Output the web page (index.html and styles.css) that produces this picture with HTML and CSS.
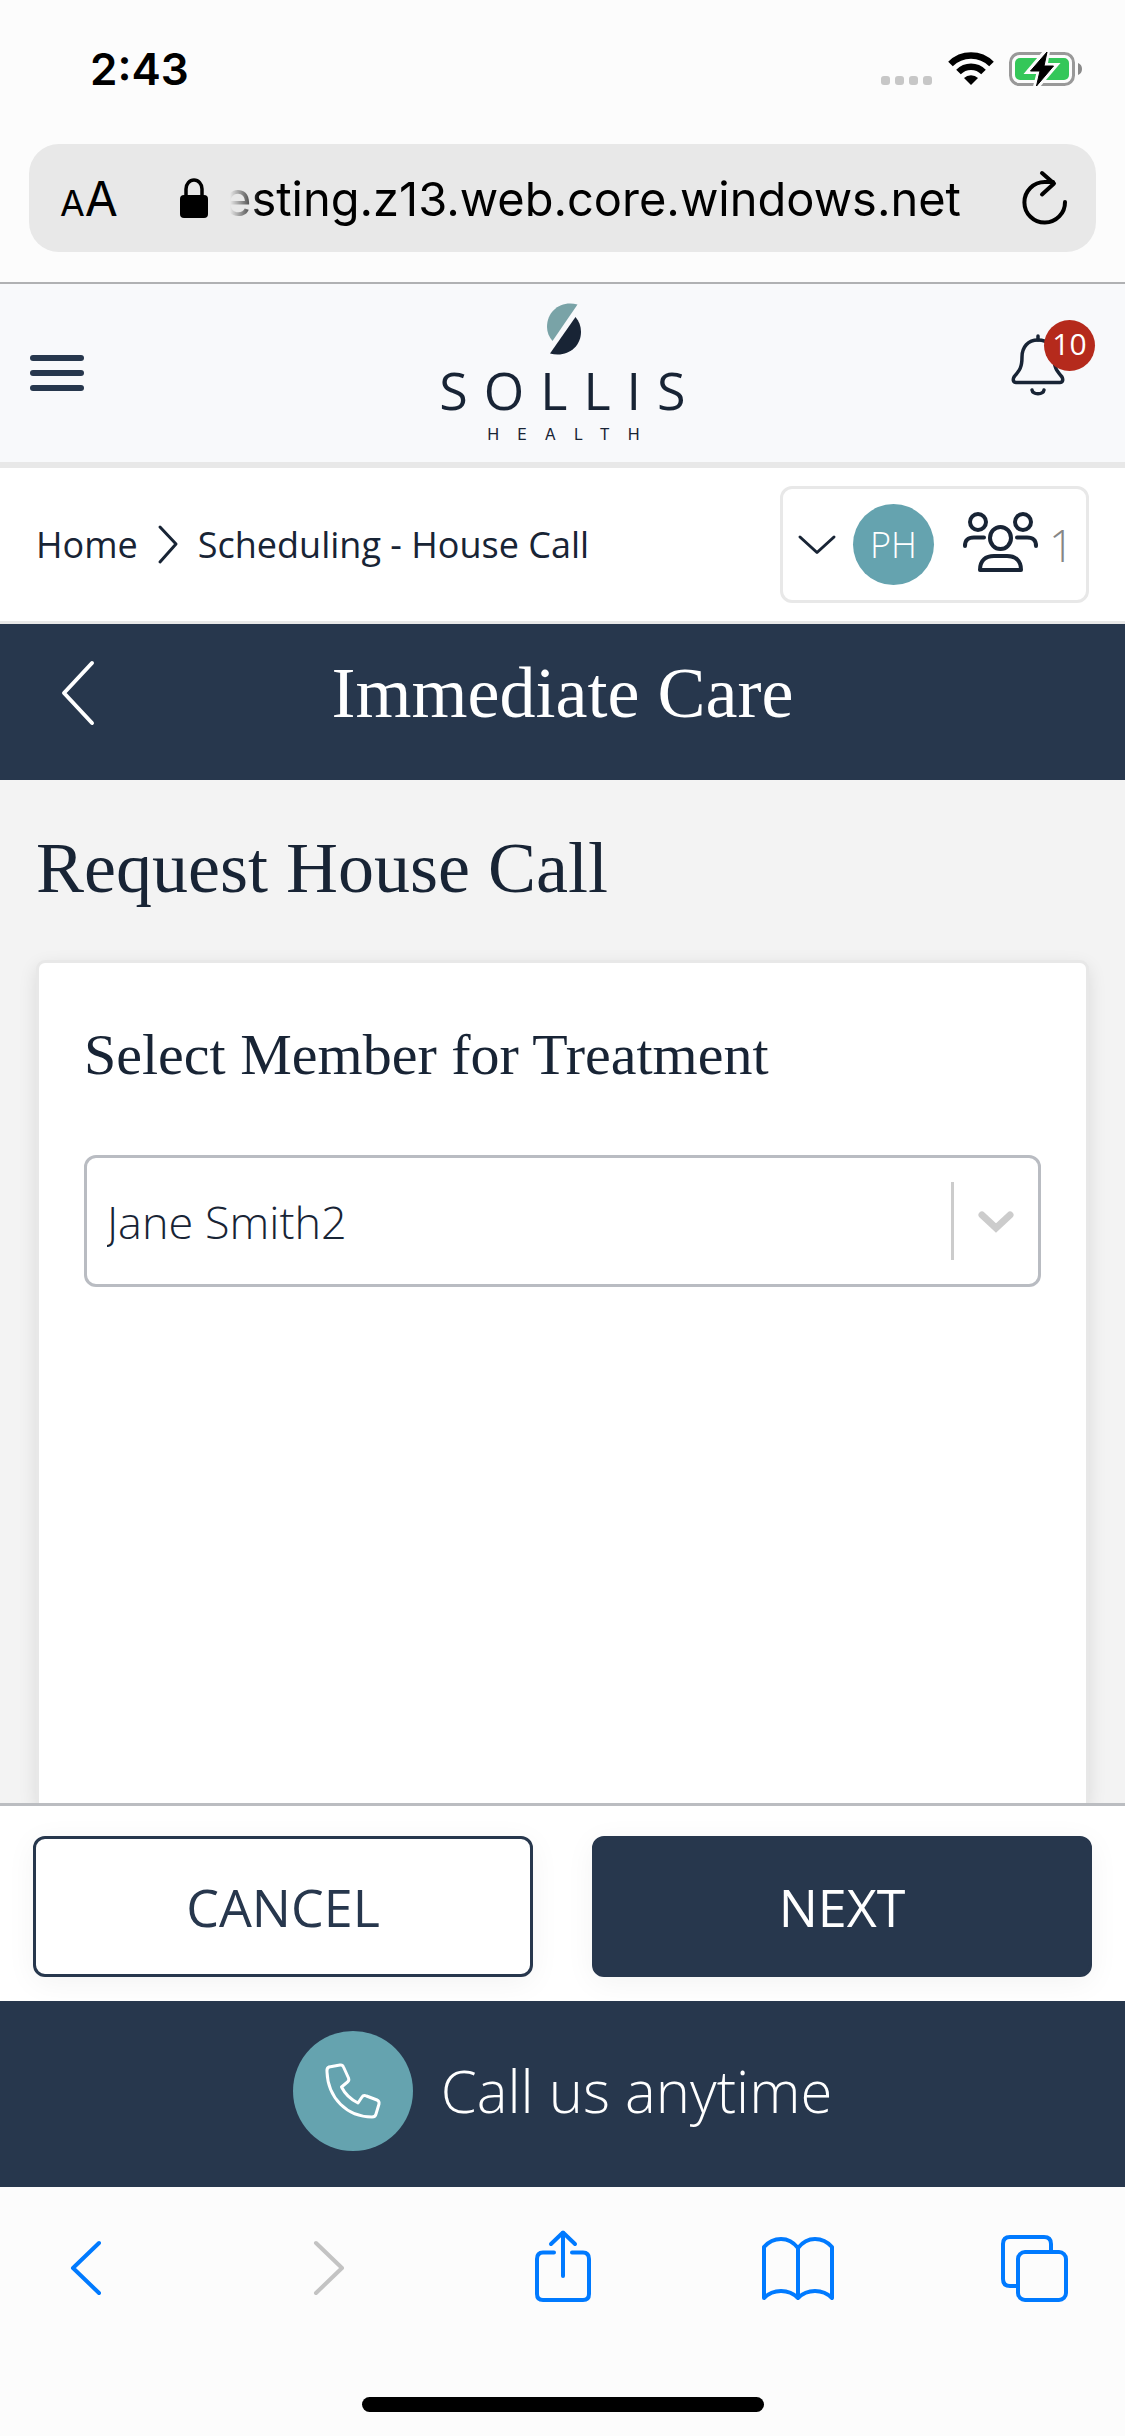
FILE: index.html
```html
<!DOCTYPE html>
<html lang="en">
<head>
<meta charset="utf-8">
<meta name="viewport" content="width=device-width, initial-scale=1">
<title>Sollis Health - Request House Call</title>
<link rel="stylesheet" href="styles.css">
</head>
<body>
<div class="browser-top">
  <div class="status-bar">
    <span class="clock">2:43</span>
    <div class="status-icons">
      <svg class="signal" width="52" height="34" viewBox="0 0 52 34" fill="#c7c7c7" aria-hidden="true">
        <rect x="0" y="24" width="9" height="9" rx="3"/><rect x="14" y="24" width="9" height="9" rx="3"/><rect x="28" y="24" width="9" height="9" rx="3"/><rect x="42" y="24" width="9" height="9" rx="3"/>
      </svg>
      <svg class="wifi" width="46" height="34" viewBox="0 0 46 34" aria-hidden="true">
        <path d="M2.500 12 A29 29 0 0 1 43.500 12" fill="none" stroke="#000" stroke-width="6.500"/>
        <path d="M10.500 20 A17.700 17.700 0 0 1 35.500 20" fill="none" stroke="#000" stroke-width="6.500"/>
        <path d="M16 26 A10 10 0 0 1 30 26 L23 33 Z"/>
      </svg>
      <svg class="battery" width="73" height="36" viewBox="0 0 73 36" aria-hidden="true">
        <rect x="1.500" y="2.500" width="63" height="31" rx="9" fill="none" stroke="#999" stroke-width="3"/>
        <path d="M69 12 a6.500 6.500 0 0 1 0 12 Z" fill="#8a8a8a"/>
        <rect x="6" y="7" width="54" height="22" rx="5" fill="#34c759"/>
        <path d="M38 0 L21 20 H31 L27 36 L45 15 H35.500 Z" stroke="#fcfcfc" stroke-width="6"/>
        <path d="M38 1 L21.500 20 H31 L27.500 35 L44.500 15 H35 Z" fill="#000" stroke="#000" stroke-width="1"/>
      </svg>
    </div>
  </div>
  <div class="address-bar">
    <button class="icon-button text-size" type="button" aria-label="Page settings"><span class="text-size-small">A</span><span class="text-size-large">A</span></button>
    <svg class="lock" width="28" height="40" viewBox="0 0 28 40" aria-hidden="true">
      <rect x="0" y="17" width="28" height="23" rx="4"/>
      <path d="M6 19 V11 a8 9 0 0 1 16 0 V19" fill="none" stroke="#000" stroke-width="3.500"/>
    </svg>
    <input class="url" type="text" value="esting.z13.web.core.windows.net" aria-label="Address">
    <button class="icon-button" type="button" aria-label="Reload">
      <svg width="46" height="54" viewBox="0 0 46 54" fill="none" stroke="#000" stroke-width="4" stroke-linecap="round" stroke-linejoin="round">
        <path d="M43 31 A20.300 20.300 0 1 1 22.700 11 H31"/>
        <path d="M20 2 L32 12.500 L20 23.500"/>
      </svg>
    </button>
  </div>
</div>

<header class="app-header">
  <button class="icon-button menu-button" type="button" aria-label="Menu">
    <svg width="54" height="36" viewBox="0 0 54 36" fill="#27374d"><rect width="54" height="6" rx="3"/><rect y="15" width="54" height="6" rx="3"/><rect y="30" width="54" height="6" rx="3"/></svg>
  </button>
  <a class="logo" href="#" aria-label="Sollis Health">
    <svg width="38" height="52" viewBox="-4 0 38 52" aria-hidden="true">
      <path d="M30.500 1.500 C14 -3 0 8 0 24 C0 29 2 34 5.500 38 Z" fill="#79a3a7"/>
      <path d="M28.500 14 C32 18 34 23 34 29 C34 44 20 55 3 50.500 Z" fill="#182435"/>
    </svg>
    <span class="logo-name">SOLLIS</span>
    <span class="logo-sub">HEALTH</span>
  </a>
  <button class="icon-button bell-button" type="button" aria-label="Notifications, 10 unread">
    <svg width="54" height="64" viewBox="0 0 54 64" fill="none" stroke="#182435" stroke-width="3.500" stroke-linecap="round" stroke-linejoin="round">
      <path d="M27 3 V7"/>
      <path d="M27 7 C17 7 11 14 11 24 C11 34 9 37 3 44 C1.500 47 2.500 49.500 5 49.500 H49 C51.500 49.500 52.500 47 51 44 C45 37 43 34 43 24 C43 14 37 7 27 7 Z"/>
      <path d="M21 57 C22 62 32 62 33 57"/>
    </svg>
    <span class="badge">10</span>
  </button>
</header>

<div class="crumb-bar">
  <nav class="crumbs" aria-label="Breadcrumb">
    <a href="#">Home</a>
    <svg width="20" height="38" viewBox="0 0 20 38" fill="none" stroke="#182435" stroke-width="3" stroke-linecap="round" stroke-linejoin="round" aria-hidden="true"><path d="M2 1 L18 18 L2 36"/></svg>
    <a href="#">Scheduling - House Call</a>
  </nav>
  <button class="account" type="button" aria-label="Switch member">
    <svg class="account-caret" width="38" height="20" viewBox="0 0 38 20" fill="none" stroke="#182435" stroke-width="3" stroke-linecap="round" stroke-linejoin="round"><path d="M2 2 L19 17.500 L36 2"/></svg>
    <span class="avatar">PH</span>
    <svg class="people" width="76" height="62" viewBox="0 0 76 62" fill="none" stroke="#182435" stroke-width="4" stroke-linecap="round" stroke-linejoin="round">
      <circle cx="15" cy="11" r="8"/><circle cx="60" cy="11" r="8"/>
      <ellipse cx="37.500" cy="27" rx="10.500" ry="11"/>
      <path d="M2 35 C2 28 6 26.500 11 26.500 H21"/><path d="M73 35 C73 28 69 26.500 64 26.500 H54"/>
      <path d="M17 59 C17 49 23 45 31 45 H44 C52 45 58 49 58 59 Z"/>
    </svg>
    <span class="member-count">1</span>
  </button>
</div>

<div class="title-bar">
  <button class="icon-button back-button" type="button" aria-label="Back">
    <svg width="34" height="66" viewBox="0 0 34 66" fill="none" stroke="#fff" stroke-width="4" stroke-linecap="round" stroke-linejoin="round"><path d="M32 3 L4 33 L32 63"/></svg>
  </button>
  <h1>Immediate Care</h1>
</div>

<main class="content">
  <h2>Request House Call</h2>
  <section class="card">
    <h3><label for="member">Select Member for Treatment</label></h3>
    <div class="select-box">
      <select id="member"><option>Jane Smith2</option></select>
      <span class="select-arrow">
        <svg width="36" height="21" viewBox="0 0 36 21" fill="none" stroke="#ccc" stroke-width="7" stroke-linecap="round" aria-hidden="true"><path d="M4 4 L18 17 L32 4"/></svg>
      </span>
    </div>
  </section>
</main>

<div class="actions">
  <button class="button" type="button">CANCEL</button>
  <button class="button button-primary" type="button">NEXT</button>
</div>

<a class="call-bar" href="tel:">
  <span class="call-icon">
    <svg width="56" height="56" viewBox="0 0 56 56" fill="none" stroke="#fff" stroke-width="3" stroke-linecap="round" stroke-linejoin="round" aria-hidden="true">
      <path d="M4 4 L15 2 Q17.500 1.500 18.500 4 L23.500 15 Q24.500 17.500 22.500 19 L16.500 24 C20 31 25 36 33 40 L37 34 Q38.500 31.500 41.500 33 L52 37 Q54.500 38 54 41 L51 51 Q50.500 54 47 54 C22 54 3 35 2 9 Q1.500 5 4 4 Z"/>
    </svg>
  </span>
  <span>Call us anytime</span>
</a>

<footer class="browser-bottom">
  <nav class="toolbar" aria-label="Browser">
    <button class="icon-button" type="button" aria-label="Back"><svg width="72" height="74" viewBox="0 0 72 74"><path d="M49 12 L23 37 L49 62"/></svg></button>
    <button class="icon-button" type="button" aria-label="Forward" disabled><svg width="72" height="74" viewBox="0 0 72 74"><path d="M28 12 L54 37 L28 62"/></svg></button>
    <button class="icon-button" type="button" aria-label="Share"><svg width="72" height="74" viewBox="0 0 72 74"><path d="M27 21.500 H16 Q10 21.500 10 28 V63 Q10 69 16 69 H56 Q62 69 62 63 V28 Q62 21.500 56 21.500 H45"/><path d="M36 45 V2"/><path d="M24 13 L36 1.500 L48 13"/></svg></button>
    <button class="icon-button" type="button" aria-label="Bookmarks"><svg width="72" height="74" viewBox="0 0 72 74"><path d="M33 17 Q26 8 16 8 Q6 8 -1 16 V67 Q6 60 16 60 Q26 60 33 67 Q40 60 50 60 Q60 60 67 67 V16 Q60 8 50 8 Q40 8 33 17 V67"/></svg></button>
    <button class="icon-button" type="button" aria-label="Tabs"><svg width="72" height="74" viewBox="0 0 72 74"><path d="M14 55 H7 Q0 55 0 48 V13 Q0 6 7 6 H41 Q48 6 48 13 V19"/><rect x="15" y="21" width="48" height="48" rx="7"/></svg></button>
  </nav>
  <div class="home-indicator"></div>
</footer>
</body>
</html>
```
FILE: styles.css
```css
:root {
  --navy: #27374d;
  --ink: #182435;
  --teal: #65a3af;
  --line: #e8e8e8;
  --chrome: #fcfcfc;
  --sans: "Open Sans", "Noto Sans", sans-serif;
  --serif: "Liberation Serif", serif;
  --system: Inter, "Liberation Sans", sans-serif;
}

* {
  box-sizing: border-box;
}

body {
  margin: 0;
  min-height: 100vh;
  display: flex;
  flex-direction: column;
  background: #f3f3f3;
  color: var(--ink);
  font-family: var(--sans);
}

svg {
  display: block;
  overflow: visible;
}

h1, h2, h3 {
  margin: 0;
  font-family: var(--serif);
  font-weight: 400;
}

a {
  color: inherit;
  text-decoration: none;
}

button {
  font-family: inherit;
  cursor: pointer;
}

.icon-button {
  padding: 0;
  border: 0;
  background: none;
  color: inherit;
}

/* Browser chrome, top */
.browser-top {
  padding-bottom: 30px;
  border-bottom: 2px solid #b0b1b3;
  background: var(--chrome);
  color: #000;
  font-family: var(--system);
}

.status-bar {
  display: flex;
  align-items: center;
  justify-content: space-between;
  height: 138px;
  margin-bottom: 6px;
  padding: 0 43px 0 90px;
}

.clock {
  font-size: 44px;
  font-weight: 600;
}

.status-icons {
  display: flex;
  align-items: center;
  gap: 15px;
}

.address-bar {
  display: flex;
  align-items: center;
  height: 108px;
  margin: 0 29px;
  padding: 0 28px 0 31px;
  border-radius: 30px;
  background: #e8e8e8;
}

.text-size {
  display: flex;
  align-items: baseline;
  width: 120px;
  font-family: var(--system);
}

.text-size-small {
  font-size: 36px;
}

.text-size-large {
  font-size: 48px;
}

.lock {
  flex: none;
}

.url {
  flex: 1;
  min-width: 0;
  margin: 0 16px;
  padding: 0;
  border: 0;
  background: none;
  color: #000;
  font-family: var(--system);
  font-size: 47px;
  -webkit-mask-image: linear-gradient(to right, transparent 6px, #000 36px);
  mask-image: linear-gradient(to right, transparent 6px, #000 36px);
}

/* App header */
.app-header {
  display: grid;
  grid-template-columns: 1fr auto 1fr;
  align-items: center;
  height: 184px;
  padding: 0 30px;
  border-bottom: 6px solid var(--line);
  background: #f8f9fb;
}

.menu-button {
  justify-self: start;
}

.logo {
  display: flex;
  flex-direction: column;
  align-items: center;
  padding-top: 2px;
}

.logo-name {
  margin-top: 3px;
  padding-left: 16px;
  font-size: 52px;
  line-height: 64px;
  letter-spacing: 16px;
}

.logo-sub {
  padding-left: 20px;
  font-family: Inter, sans-serif;
  font-size: 16px;
  line-height: 24px;
  letter-spacing: 18px;
}

.bell-button {
  position: relative;
  justify-self: end;
  padding: 0 30px 16px 0;
}

.badge {
  position: absolute;
  top: -13px;
  right: 0;
  width: 51px;
  height: 51px;
  border-radius: 50%;
  background: #b52a1c;
  color: #fff;
  font-family: var(--sans);
  font-size: 30px;
  line-height: 47px;
  text-align: center;
}

/* Breadcrumb */
.crumb-bar {
  display: flex;
  align-items: center;
  justify-content: space-between;
  height: 156px;
  padding: 0 36px;
  border-bottom: 3px solid var(--line);
  background: #fff;
}

.crumbs {
  display: flex;
  align-items: center;
  gap: 20px;
  font-size: 36px;
}

.account {
  display: flex;
  align-items: center;
  height: 117px;
  padding: 0 12px 0 15px;
  border: 3px solid var(--line);
  border-radius: 12px;
  background: #fff;
}

.account-caret {
  margin-right: 17px;
}

.avatar {
  width: 81px;
  margin-right: 29px;
  border-radius: 50%;
  background: var(--teal);
  color: #fff;
  font-size: 36px;
  font-weight: 300;
  line-height: 81px;
  text-align: center;
}

.people {
  margin: 0 10px 6px 0;
}

.member-count {
  color: #868686;
  font-size: 44px;
  font-weight: 300;
}

/* Title bar */
.title-bar {
  display: grid;
  grid-template-columns: 1fr auto 1fr;
  align-items: center;
  height: 156px;
  padding: 0 60px 18px;
  background: var(--navy);
  color: #fff;
}

.back-button {
  justify-self: start;
}

.title-bar h1,
.content h2 {
  font-size: 72px;
  line-height: 84px;
}

/* Content */
.content {
  flex: 1;
  display: flex;
  flex-direction: column;
  padding: 46px 36px 0;
}

.card {
  flex: 1;
  margin-top: 50px;
  padding: 56px 45px 72px;
  border: 3px solid var(--line);
  border-bottom: 0;
  border-radius: 9px 9px 0 0;
  background: #fff;
  box-shadow: 0 6px 18px rgba(0, 0, 0, 0.1);
}

.card h3 {
  margin-bottom: 64px;
  font-size: 58px;
  line-height: 72px;
}

.select-box {
  position: relative;
}

.select-box select {
  display: block;
  width: 100%;
  height: 132px;
  padding: 0 110px 0 20px;
  border: 3px solid #b9bcc2;
  border-radius: 12px;
  background: #fff;
  color: var(--ink);
  font-family: var(--sans);
  font-size: 45px;
  font-weight: 300;
  appearance: none;
}

.select-arrow {
  position: absolute;
  top: 27px;
  right: 3px;
  bottom: 27px;
  display: flex;
  align-items: center;
  padding: 0 24px;
  border-left: 3px solid #ccc;
  pointer-events: none;
}

/* Action buttons */
.actions {
  position: relative;
  display: grid;
  grid-template-columns: 1fr 1fr;
  gap: 59px;
  padding: 30px 33px 24px;
  border-top: 3px solid #bbbdc1;
  background: #fff;
}

.button {
  height: 141px;
  padding: 0;
  border: 3px solid var(--navy);
  border-radius: 12px;
  background: #fff;
  box-shadow: 0 6px 30px rgba(0, 0, 0, 0.05);
  color: var(--navy);
  font-size: 52px;
}

.button-primary {
  background: var(--navy);
  color: #fff;
}

.call-bar {
  position: relative;
  display: flex;
  align-items: center;
  justify-content: center;
  gap: 28px;
  padding: 30px 30px 36px;
  background: var(--navy);
  color: #fff;
  font-size: 58px;
  font-weight: 300;
  line-height: 72px;
}

.call-icon {
  display: grid;
  place-items: center;
  width: 120px;
  height: 120px;
  border-radius: 50%;
  background: var(--teal);
}

/* Browser chrome, bottom */
.browser-bottom {
  display: flex;
  flex-direction: column;
  justify-content: space-between;
  height: 249px;
  padding: 44px 0 24px;
  background: var(--chrome);
}

.toolbar {
  display: flex;
  justify-content: space-between;
  padding: 0 50px;
}

.toolbar svg {
  fill: none;
  stroke: #007aff;
  stroke-width: 4px;
  stroke-linecap: round;
  stroke-linejoin: round;
}

.toolbar button:disabled svg {
  stroke: #c3c3c3;
}

.home-indicator {
  align-self: center;
  width: 402px;
  height: 15px;
  border-radius: 8px;
  background: #000;
}
```
